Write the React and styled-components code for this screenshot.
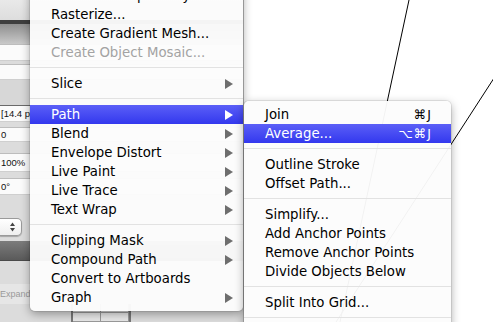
import React from 'react';
import styled, { createGlobalStyle } from 'styled-components';

const GlobalStyle = createGlobalStyle`
  html, body {
    margin: 0;
    padding: 0;
    background: #ffffff;
    overflow: hidden;
  }
`;

const Screen = styled.div`
  position: relative;
  width: 493px;
  height: 322px;
  overflow: hidden;
  display: flex;
  font-family: "DejaVu Sans", "Liberation Sans", sans-serif;
`;

const Panel = styled.div`
  width: 244px;
  flex-shrink: 0;
  display: flex;
  flex-direction: column;
  background: #dcdcdc;
  border-right: 1px solid #c4c4c4;
  box-sizing: border-box;
  font-family: "Liberation Sans", Arial, sans-serif;
`;

const Band = styled.div`
  height: ${p => p.h}px;
  flex-shrink: 0;
  background: ${p => p.bg || '#dcdcdc'};
  border-top: ${p => (p.edge ? `${p.edge}px solid #3e3e3e` : 'none')};
`;

const Field = styled.div`
  height: ${p => p.h || 17}px;
  flex-shrink: 0;
  margin-top: ${p => p.gap || 0}px;
  background: #fbfbfb;
  border-top: 1px solid ${p => (p.active ? '#6a6a6a' : '#bdbdbd')};
  border-bottom: 1px solid #cfcfcf;
  box-sizing: border-box;
  font-size: 9.5px;
  color: #111;
  padding-left: 1px;
  display: flex;
  align-items: center;
`;

const Select = styled.div`
  width: 22px;
  height: 28px;
  margin-top: ${p => p.gap}px;
  background: linear-gradient(#ffffff, #efefef);
  border: 1px solid #9a9a9a;
  border-left: none;
  border-radius: 0 5px 5px 0;
  box-shadow: 0 1px 1px rgba(0, 0, 0, 0.25);
  box-sizing: border-box;
  display: flex;
  align-items: center;
  justify-content: flex-end;
  padding-right: 6px;
`;

const DarkBar = styled.div`
  height: 19px;
  margin-top: 5px;
  flex-shrink: 0;
  background: linear-gradient(#7c7c7c, #5a5a5a);
  border-bottom: 1px solid #4a4a4a;
`;

const Caption = styled.div`
  margin-top: 23px;
  height: 20px;
  flex-shrink: 0;
  font-size: 9px;
  color: #9a9a9a;
  background: #e6e6e6;
  display: flex;
  align-items: center;
`;

const Widget = styled.div`
  margin-left: 71px;
  width: 56px;
  flex: 1;
  border-left: 2px solid #777;
  border-right: 2px solid #777;
  background: #e8e8e8;
  display: grid;
  grid-template-columns: 1fr 1fr;
  grid-auto-rows: 9px;
`;

const Cell = styled.div`
  border-right: 1px solid #9a9a9a;
  border-bottom: 1px solid #9a9a9a;
`;

const Canvas = styled.div`
  position: relative;
  flex: 1;
  background: #ffffff;
`;

const Strokes = styled.svg`
  position: absolute;
  left: 0;
  top: 0;
`;

const Menu = styled.div`
  position: absolute;
  left: ${p => p.x}px;
  top: ${p => p.y}px;
  width: ${p => p.w}px;
  padding: 4px 0;
  background: rgba(252, 252, 252, 0.96);
  border-radius: ${p => p.radius};
  box-shadow: 0 3px 10px rgba(0, 0, 0, 0.35), 0 0 0 1px rgba(0, 0, 0, 0.08);
  font-size: 13.3px;
  color: #000;
`;

const Item = styled.div`
  height: 19px;
  display: flex;
  align-items: center;
  justify-content: space-between;
  padding: 0 ${p => p.pr}px 0 21px;
  white-space: nowrap;
  color: ${p => (p.active ? '#ffffff' : p.disabled ? '#a3a3a3' : '#000000')};
  background: ${p => (p.active ? 'linear-gradient(#5b5ff7, #3338ee)' : 'transparent')};
`;

const Arrow = styled.span`
  width: 0;
  height: 0;
  border-top: 5px solid transparent;
  border-bottom: 5px solid transparent;
  border-left: 8px solid ${p => (p.active ? '#ffffff' : '#6e6e6e')};
`;

const Keys = styled.span`
  font-size: 12.5px;
  letter-spacing: 1px;
`;

const Divider = styled.div`
  height: 12px;
  display: flex;
  align-items: center;
  &::after {
    content: '';
    flex: 1;
    height: 1px;
    margin-top: -1px;
    background: #e2e2e2;
  }
`;

const objectItems = [
  { label: 'Flatten Transparency...' },
  { label: 'Rasterize...' },
  { label: 'Create Gradient Mesh...' },
  { label: 'Create Object Mosaic...', disabled: true },
  { sep: true },
  { label: 'Slice', sub: true },
  { sep: true },
  { label: 'Path', sub: true, active: true },
  { label: 'Blend', sub: true },
  { label: 'Envelope Distort', sub: true },
  { label: 'Live Paint', sub: true },
  { label: 'Live Trace', sub: true },
  { label: 'Text Wrap', sub: true },
  { sep: true },
  { label: 'Clipping Mask', sub: true },
  { label: 'Compound Path', sub: true },
  { label: 'Convert to Artboards' },
  { label: 'Graph', sub: true },
];

const pathItems = [
  { label: 'Join', keys: '⌘J' },
  { label: 'Average...', keys: '⌥⌘J', active: true },
  { sep: true },
  { label: 'Outline Stroke' },
  { label: 'Offset Path...' },
  { sep: true },
  { label: 'Simplify...' },
  { label: 'Add Anchor Points' },
  { label: 'Remove Anchor Points' },
  { label: 'Divide Objects Below' },
  { sep: true },
  { label: 'Split Into Grid...' },
  { sep: true },
];

function MenuList({ items, pr }) {
  return items.map((it, i) =>
    it.sep ? (
      <Divider key={i} />
    ) : (
      <Item key={i} active={it.active} disabled={it.disabled} pr={pr}>
        <span>{it.label}</span>
        {it.sub && <Arrow active={it.active} />}
        {it.keys && <Keys>{it.keys}</Keys>}
      </Item>
    )
  );
}

function UpDown() {
  return (
    <svg width="5" height="10" viewBox="0 0 5 10">
      <path d="M2.5 0.5 L5 4 L0 4 Z M2.5 9.5 L5 6 L0 6 Z" fill="#444" />
    </svg>
  );
}

export default function App() {
  return (
    <>
      <GlobalStyle />
      <Screen>
        <Panel>
          <Band h={20} bg="linear-gradient(#e9e9e9, #dddddd)" />
          <Band h={20} edge={4} bg="linear-gradient(#8e8e8e, #c9c9c9)" />
          <Field h={17} />
          <Field h={16} gap={3} />
          <Band h={25} bg="#d7d7d7" />
          <Field h={17} active>[14.4 pt</Field>
          <Field h={15} gap={5}>0</Field>
          <Field h={19} gap={11}>100%</Field>
          <Field h={17} gap={6}>0°</Field>
          <Select gap={23}>
            <UpDown />
          </Select>
          <DarkBar />
          <Caption>Expand</Caption>
          <Widget>
            <Cell />
            <Cell />
            <Cell />
            <Cell />
          </Widget>
        </Panel>
        <Canvas>
          <Strokes width="249" height="322" viewBox="0 0 249 322">
            <line x1="165" y1="0" x2="96" y2="322" stroke="#000" strokeWidth="1" />
            <line x1="252" y1="75" x2="92" y2="322" stroke="#000" strokeWidth="1" />
          </Strokes>
        </Canvas>
        <Menu x={30} y={-18} w={213} radius="0 0 5px 5px">
          <MenuList items={objectItems} pr={10} />
        </Menu>
        <Menu x={244} y={101} w={207} radius="5px 5px 0 0">
          <MenuList items={pathItems} pr={19} />
        </Menu>
      </Screen>
    </>
  );
}
